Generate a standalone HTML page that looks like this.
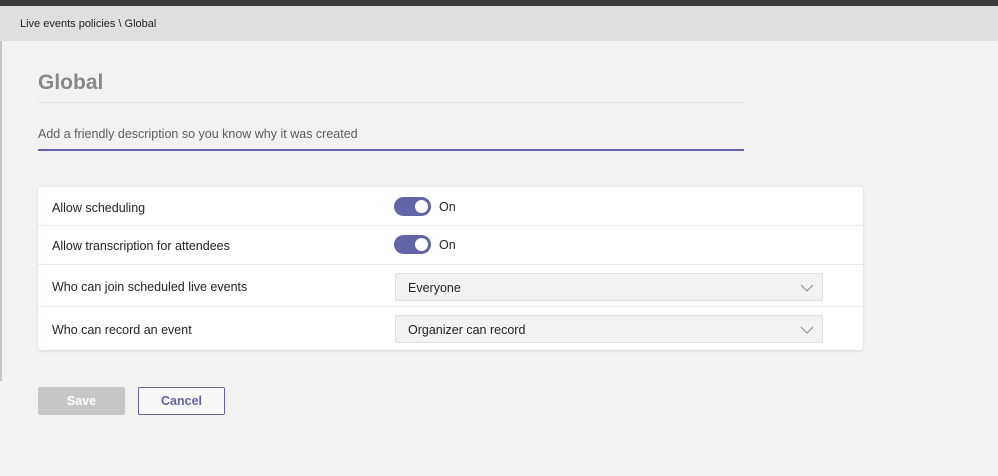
<!DOCTYPE html>
<html><head><style>
*{margin:0;padding:0;box-sizing:border-box}
body{width:998px;height:476px;background:#f3f2f1;font-family:"Liberation Sans",sans-serif;position:relative;overflow:hidden;color:#252423}
.top{position:absolute;left:0;top:0;width:998px;height:6px;background:#3b3a39}
.hdr{position:absolute;left:0;top:6px;width:998px;height:35px;background:#e1dfdd;font-size:11px;color:#252423;padding:12px 0 0 20px}
.lb{position:absolute;left:0;top:41px;width:2px;height:340px;background:#c8c6c4}
.title{position:absolute;left:38px;top:71px;font-size:21px;font-weight:bold;color:#8a8886}
.hr{position:absolute;left:38px;top:102px;width:706px;height:1px;background:#e1dfdd}
.desc{position:absolute;left:38px;top:127px;font-size:12.5px;color:#605e5c}
.ul{position:absolute;left:38px;top:149px;width:706px;height:2px;background:#6264a7}
.card{position:absolute;left:38px;top:187px;width:825px;height:163px;background:#fff;border-radius:3px;box-shadow:0 1px 3px rgba(0,0,0,.12)}
.row{position:absolute;left:0;width:825px;border-bottom:1px solid #edebe9;font-size:12.5px}
.row .l{position:absolute;left:14px}
.tg{position:absolute;left:356px;width:37px;height:19px;border-radius:10px;background:#6264a7}
.tg::after{content:"";position:absolute;right:3px;top:3px;width:13px;height:13px;border-radius:50%;background:#fff}
.on{position:absolute;left:401px;font-size:12.5px}
.dd{position:absolute;left:357px;width:428px;height:28px;background:#f3f2f1;border:1px solid #e1dfdd;border-radius:2px;font-size:12.5px;padding:7px 0 0 12px}
.dd svg{position:absolute;right:8px;top:10px}
.btn{position:absolute;top:387px;width:87px;height:28px;border-radius:2px;font-size:12.5px;font-weight:bold;text-align:center;line-height:26px}
</style></head><body>
<div class="top"></div>
<div class="hdr">Live events policies \ Global</div>
<div class="lb"></div>
<div class="title">Global</div>
<div class="hr"></div>
<div class="desc">Add a friendly description so you know why it was created</div>
<div class="ul"></div>
<div class="card">
 <div class="row" style="top:0;height:39px"><span class="l" style="top:14px">Allow scheduling</span><div class="tg" style="top:10px"></div><span class="on" style="top:13px">On</span></div>
 <div class="row" style="top:39px;height:39px"><span class="l" style="top:13px">Allow transcription for attendees</span><div class="tg" style="top:9px"></div><span class="on" style="top:12px">On</span></div>
 <div class="row" style="top:78px;height:42px"><span class="l" style="top:15px">Who can join scheduled live events</span><div class="dd" style="top:8px">Everyone<svg width="14" height="8"><path d="M1 1L7 7L13 1" stroke="#8a8886" fill="none"/></svg></div></div>
 <div class="row" style="top:120px;height:43px;border:none"><span class="l" style="top:16px">Who can record an event</span><div class="dd" style="top:8px">Organizer can record<svg width="14" height="8"><path d="M1 1L7 7L13 1" stroke="#8a8886" fill="none"/></svg></div></div>
</div>
<div class="btn" style="left:38px;background:#c8c6c4;color:#fff;line-height:28px">Save</div>
<div class="btn" style="left:138px;border:1px solid #6264a7;color:#6264a7;background:#f8f8f8">Cancel</div>
</body></html>
